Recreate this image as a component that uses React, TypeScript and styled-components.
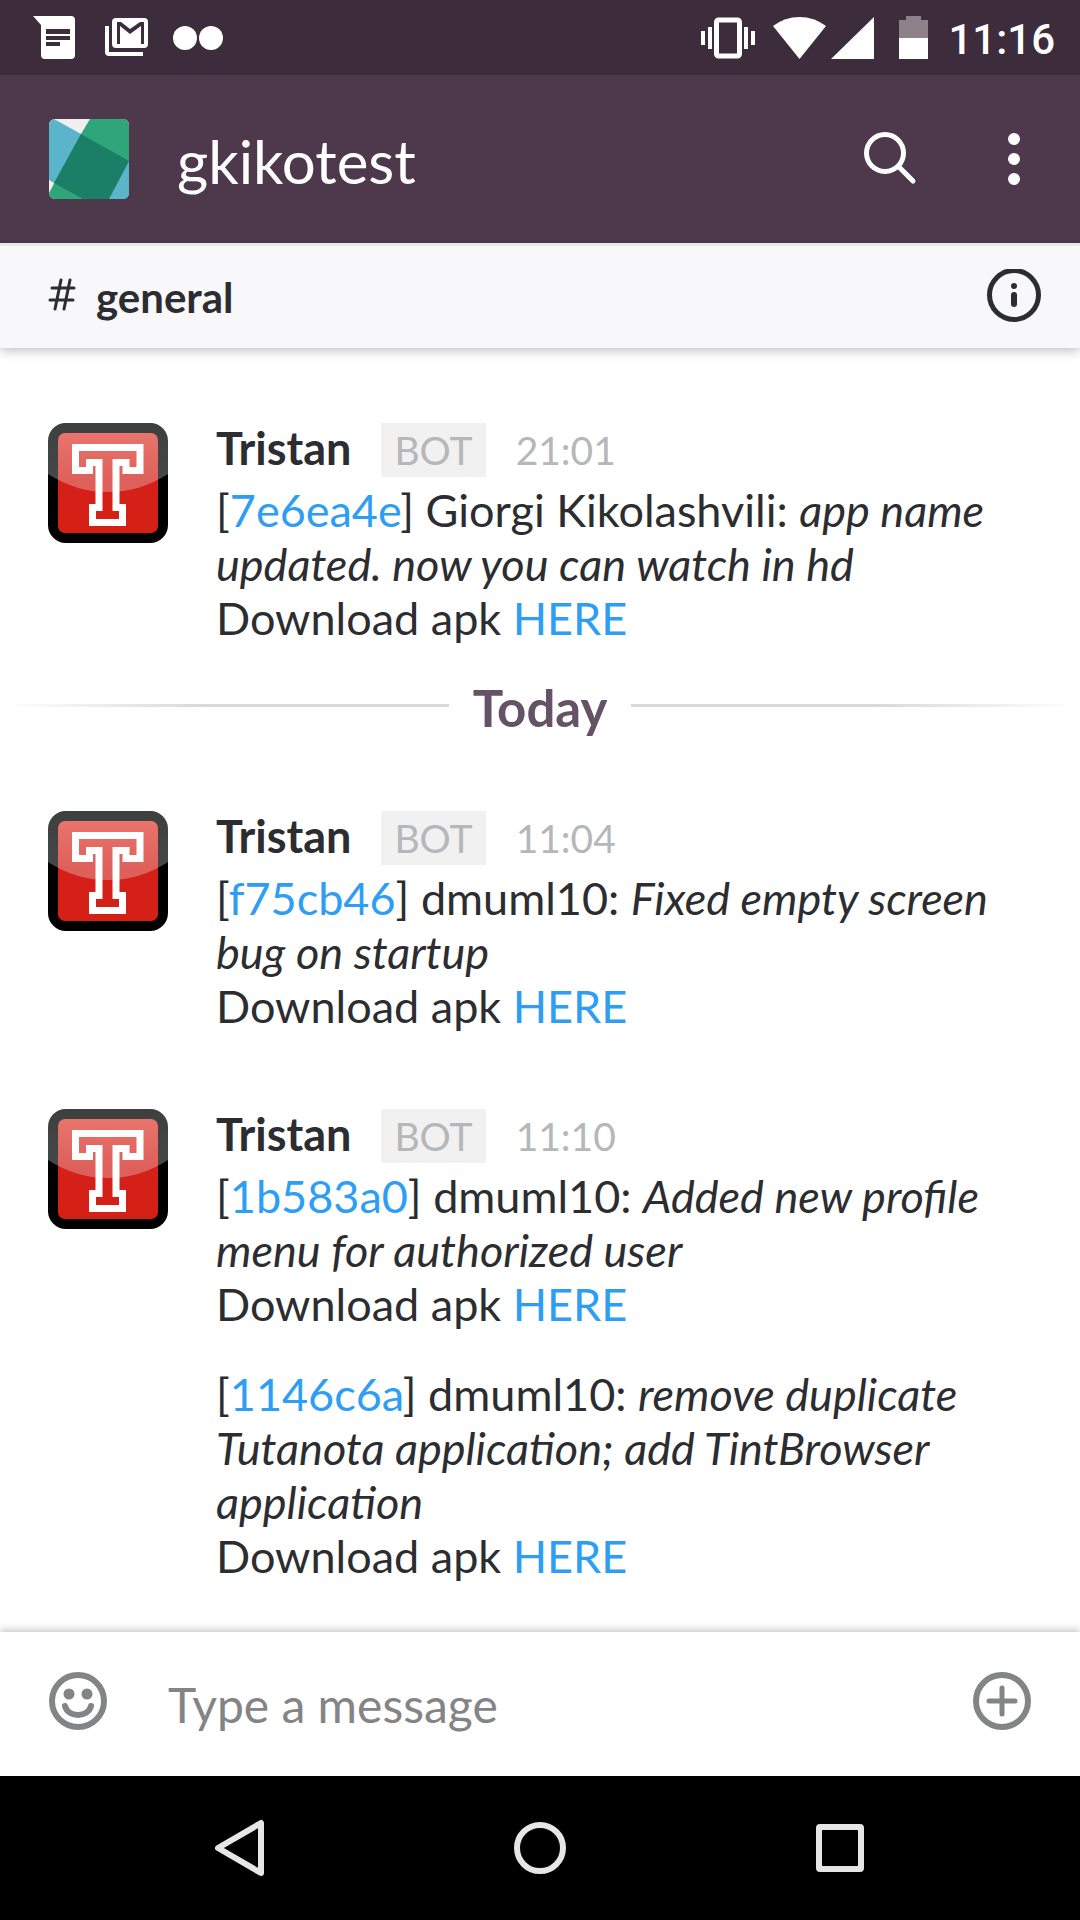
import React, { useId } from "react";
import styled, { createGlobalStyle } from "styled-components";

const GlobalStyle = createGlobalStyle`
  *, *::before, *::after { box-sizing: border-box; }
  html, body, #root { height: 100%; }
  body {
    margin: 0;
    background: #fff;
    color: #2c2d30;
    font-family: Lato, "Noto Sans", sans-serif;
  }
`;

const Screen = styled.div`
  display: flex;
  flex-direction: column;
  min-height: 100%;
`;

const StatusBar = styled.div`
  display: flex;
  align-items: center;
  justify-content: space-between;
  height: 75px;
  padding: 0 25px 0 33px;
  background: #3d2c3b;
  color: #fff;
`;

const StatusGroup = styled.div<{ $gap: number }>`
  display: flex;
  align-items: center;
  gap: ${(p) => p.$gap}px;
`;

const StatusIcons = styled.svg`
  display: block;
`;

const Clock = styled.time`
  font-family: Roboto, sans-serif;
  font-weight: 500;
  font-size: 42px;
  line-height: 48px;
  padding-top: 4px;
`;

const Header = styled.header`
  display: flex;
  align-items: center;
  height: 168px;
  padding: 0 48px 0 49px;
  background: #4e384b;
  color: #fff;
`;

const TeamName = styled.h1`
  flex: 1;
  margin: 0;
  padding: 4px 0 0 48px;
  font-size: 60px;
  font-weight: 400;
  line-height: 72px;
`;

const IconButton = styled.button`
  display: block;
  flex: none;
  padding: 0;
  border: 0;
  background: none;
  color: inherit;
  cursor: pointer;

  svg { display: block; }
`;

const HeaderActions = styled.div`
  display: flex;
  align-items: center;
  gap: 68px;
`;

const ChannelBar = styled.div`
  position: relative;
  z-index: 1;
  display: flex;
  align-items: center;
  gap: 20px;
  height: 105px;
  padding: 0 38px 0 48px;
  border-top: 3px solid #e8e8ea;
  background: #f8f8fa;
  box-shadow: 0 3px 10px rgba(0, 0, 0, 0.24);
`;

const ChannelName = styled.h2`
  flex: 1;
  margin: 0;
  font-size: 42px;
  font-weight: 700;
  line-height: 50px;
`;

const Feed = styled.main`
  flex: 1;
  padding: 73px 0 48px;
`;

const Message = styled.article`
  display: flex;
  gap: 48px;
  padding: 0 48px;

  & + & { margin-top: 74px; }
`;

const AvatarSvg = styled.svg`
  display: block;
  flex: none;
  margin-top: 2px;
`;

const MessageBody = styled.div`
  flex: 1;
  min-width: 0;
  font-size: 45px;
  line-height: 54px;
`;

const MessageHead = styled.div`
  display: flex;
  align-items: baseline;
  height: 54px;
  margin-bottom: 8px;
`;

const Author = styled.strong`
  font-weight: 700;
`;

const BotTag = styled.span`
  margin: 0 30px;
  padding: 0 13px;
  background: #f1f1f1;
  color: #b6b7b9;
  font-size: 39px;
`;

const Stamp = styled.time`
  color: #b6b7b9;
  font-size: 39px;
`;

const Commit = styled.p`
  margin: 0;

  & + & { margin-top: 36px; }
`;

const Link = styled.a`
  color: #2d9ef4;
  text-decoration: none;
`;

const DayDivider = styled.div`
  display: flex;
  align-items: center;
  gap: 24px;
  margin: 32px 0 71px;
`;

const Rule = styled.span<{ $to: "left" | "right" }>`
  flex: 1;
  height: 3px;
  margin-bottom: 4px;
  background: linear-gradient(to ${(p) => p.$to}, #d8d8d8 54%, transparent 99%);
`;

const DayLabel = styled.span`
  color: #655267;
  font-size: 51px;
  font-weight: 700;
  line-height: 61px;
`;

const Composer = styled.form`
  position: relative;
  display: flex;
  align-items: center;
  gap: 60px;
  height: 144px;
  padding: 0 48px;
  background: #fff;
  color: #838486;
  box-shadow: 0 -2px 8px rgba(0, 0, 0, 0.24);
`;

const MessageInput = styled.input`
  flex: 1;
  min-width: 0;
  height: 72px;
  padding: 0;
  border: 0;
  outline: 0;
  background: none;
  color: #2c2d30;
  font: 400 48px/64px Lato, "Noto Sans", sans-serif;

  &::placeholder { color: #838486; opacity: 1; }
`;

const NavBar = styled.nav`
  display: flex;
  align-items: center;
  justify-content: center;
  gap: 240px;
  height: 144px;
  background: #000;
  color: #e6e6e6;
`;

function TeamLogo() {
  const clip = useId();
  return (
    <svg width="80" height="80" viewBox="0 0 80 80" role="img" aria-label="Team logo">
      <clipPath id={clip}>
        <rect width="80" height="80" rx="6" />
      </clipPath>
      <g clipPath={`url(#${clip})`}>
        <rect width="80" height="80" fill="#f0f0f0" />
        <path d="M0-2L5 0 32 15 80 42V80H60L5 64 0 61z" fill="#5ab5cb" />
        <path d="M41 0H80V42L60 80H0V74L32 15z" fill="#2ea679" />
        <path d="M80 42V80H60z" fill="#5ab5cb" />
        <path d="M32 15L80 42 60 80H34L5 64z" fill="#1b7f67" />
      </g>
    </svg>
  );
}

function BotAvatar() {
  const id = useId();
  return (
    <AvatarSvg width="120" height="120" viewBox="0 0 120 120" role="img" aria-label="Tristan">
      <defs>
        <clipPath id={`${id}c`}>
          <rect width="120" height="120" rx="18" />
        </clipPath>
        <linearGradient id={`${id}r`} x1="0" y1="0" x2="0" y2="1">
          <stop offset="0" stopColor="#e5453a" />
          <stop offset="0.5" stopColor="#d5201a" />
          <stop offset="1" stopColor="#d52015" />
        </linearGradient>
        <linearGradient id={`${id}g`} x1="0" y1="0" x2="0" y2="1">
          <stop offset="0" stopColor="#f4fffd" stopOpacity="0.25" />
          <stop offset="1" stopColor="#f4fffd" stopOpacity="0.29" />
        </linearGradient>
      </defs>
      <g clipPath={`url(#${id}c)`}>
        <rect width="120" height="120" fill="#000" />
        <rect x="10" y="10" width="100" height="100" rx="7" fill={`url(#${id}r)`} />
        <path d="M0 0H120V51Q92 69 60 69T0 51z" fill={`url(#${id}g)`} />
        <path
          d="M27.500 24.500H92V47.500H78V39.500H68V84.500H74.500V99.500H44.500V84.500H51V39.500H41.500V47.500H27.500z"
          fill="none"
          stroke="#fff"
          strokeWidth="7"
        />
      </g>
    </AvatarSvg>
  );
}

type CommitInfo = { hash: string; user: string; text: string };
type MessageInfo = { time: string; commits: CommitInfo[] };

const yesterday: MessageInfo[] = [
  {
    time: "21:01",
    commits: [
      { hash: "7e6ea4e", user: "Giorgi Kikolashvili", text: "app name updated. now you can watch in hd" },
    ],
  },
];

const today: MessageInfo[] = [
  {
    time: "11:04",
    commits: [{ hash: "f75cb46", user: "dmuml10", text: "Fixed empty screen bug on startup" }],
  },
  {
    time: "11:10",
    commits: [
      { hash: "1b583a0", user: "dmuml10", text: "Added new profile menu for authorized user" },
      {
        hash: "1146c6a",
        user: "dmuml10",
        text: "remove duplicate Tutanota application; add TintBrowser application",
      },
    ],
  },
];

function BotMessage({ time, commits }: MessageInfo) {
  return (
    <Message>
      <BotAvatar />
      <MessageBody>
        <MessageHead>
          <Author>Tristan</Author>
          <BotTag>BOT</BotTag>
          <Stamp>{time}</Stamp>
        </MessageHead>
        {commits.map((c) => (
          <Commit key={c.hash}>
            [<Link href={`#${c.hash}`}>{c.hash}</Link>] {c.user}: <em>{c.text}</em>
            <br />
            Download apk <Link href={`#apk-${c.hash}`}>HERE</Link>
          </Commit>
        ))}
      </MessageBody>
    </Message>
  );
}

export default function App() {
  return (
    <>
      <GlobalStyle />
      <Screen>
        <StatusBar>
          <StatusGroup $gap={25}>
            <StatusIcons width="47" height="44" viewBox="0 0 47 44" aria-hidden="true">
              <path
                fillRule="evenodd"
                fill="#fff"
                d="M0 0H38a4 4 0 0 1 4 4V39a4 4 0 0 1-4 4H12a4 4 0 0 1-4-4V9zM13 13V18H37V13zM13 20V24H37V20zM13 26V30H27V26z"
              />
            </StatusIcons>
            <StatusIcons width="43" height="39" viewBox="0 0 43 39" aria-hidden="true">
              <path fill="#fff" d="M0 8H4V34H38V38H4a4 4 0 0 1-4-4z" />
              <rect x="7" width="36" height="30" rx="4" fill="#fff" />
              <path
                d="M12 4H16L25 11 35 4H39V26H36V8L25 16 15 8V26H12z"
                fill="#3d2c3b"
              />
            </StatusIcons>
            <StatusIcons width="50" height="24" viewBox="0 0 50 24" aria-hidden="true">
              <circle cx="12" cy="12" r="12" fill="#fff" />
              <circle cx="38" cy="12" r="12" fill="#fff" />
            </StatusIcons>
          </StatusGroup>
          <StatusGroup $gap={20}>
            <StatusIcons width="227" height="44" viewBox="0 0 227 44" aria-hidden="true">
              <g fill="#fff">
                <path d="M0 15H4V29H0zM7 11H11V33H7zM43 11H47V33H43zM50 15H54V29H50z" />
                <path d="M72 10Q84 1 98.500 1T125 10L98.500 43z" />
                <path d="M173 1V43H130z" />
                <path d="M198 22H227V43H198z" />
              </g>
              <rect x="15.500" y="4" width="23" height="36" rx="2" fill="none" stroke="#fff" strokeWidth="5" />
              <path d="M205 0H220V4H227V22H198V4H205z" fill="#8e8089" />
            </StatusIcons>
            <Clock>11:16</Clock>
          </StatusGroup>
        </StatusBar>

        <Header>
          <TeamLogo />
          <TeamName>gkikotest</TeamName>
          <HeaderActions>
            <IconButton type="button" aria-label="Search">
              <svg width="72" height="72" viewBox="0 0 72 72" fill="none" stroke="#fff" strokeWidth="5">
                <circle cx="29" cy="30" r="18.500" />
                <path d="M43 44L57 58" strokeLinecap="round" />
              </svg>
            </IconButton>
            <IconButton type="button" aria-label="More options">
              <svg width="36" height="60" viewBox="0 0 36 60" fill="#fff">
                <circle cx="18" cy="10" r="6" />
                <circle cx="18" cy="30" r="6" />
                <circle cx="18" cy="50" r="6" />
              </svg>
            </IconButton>
          </HeaderActions>
        </Header>

        <ChannelBar>
          <svg
            width="28"
            height="44"
            viewBox="0 0 28 44"
            fill="none"
            stroke="#2c2d30"
            strokeWidth="3"
            strokeLinecap="round"
            aria-hidden="true"
          >
            <path d="M13 5L7 34M22 5L16 34M4 13H26M2 25H25" />
          </svg>
          <ChannelName>general</ChannelName>
          <IconButton type="button" aria-label="Channel info">
            <svg width="56" height="56" viewBox="0 0 56 56" fill="none" stroke="#2c2d30">
              <circle cx="28" cy="26" r="24.500" strokeWidth="5" />
              <path d="M28 26V35" strokeWidth="6" strokeLinecap="round" />
              <circle cx="28" cy="17" r="3" fill="#2c2d30" stroke="none" />
            </svg>
          </IconButton>
        </ChannelBar>

        <Feed>
          {yesterday.map((m) => (
            <BotMessage key={m.time} {...m} />
          ))}
          <DayDivider>
            <Rule $to="left" />
            <DayLabel>Today</DayLabel>
            <Rule $to="right" />
          </DayDivider>
          {today.map((m) => (
            <BotMessage key={m.time} {...m} />
          ))}
        </Feed>

        <Composer>
          <IconButton type="button" aria-label="Insert emoji">
            <svg width="60" height="66" viewBox="0 0 60 66" fill="none" stroke="currentColor">
              <circle cx="30" cy="30" r="26" strokeWidth="6" />
              <path d="M17 35C20 47 40 47 43 35" strokeWidth="6" strokeLinecap="round" />
              <circle cx="21" cy="23" r="5.500" fill="currentColor" stroke="none" />
              <circle cx="39" cy="23" r="5.500" fill="currentColor" stroke="none" />
            </svg>
          </IconButton>
          <MessageInput aria-label="Message" placeholder="Type a message" />
          <IconButton type="button" aria-label="Add attachment">
            <svg width="60" height="66" viewBox="0 0 60 66" fill="none" stroke="currentColor">
              <circle cx="30" cy="30" r="26" strokeWidth="6" />
              <path d="M30 17V43M17 30H43" strokeWidth="5" strokeLinecap="round" />
            </svg>
          </IconButton>
        </Composer>

        <NavBar aria-label="System navigation">
          <IconButton type="button" aria-label="Back">
            <svg width="60" height="60" viewBox="0 0 60 60" fill="none" stroke="currentColor">
              <path d="M51 5V55L8 30z" strokeWidth="6" strokeLinejoin="round" />
            </svg>
          </IconButton>
          <IconButton type="button" aria-label="Home">
            <svg width="60" height="60" viewBox="0 0 60 60" fill="none" stroke="currentColor">
              <circle cx="30" cy="30" r="23" strokeWidth="6" />
            </svg>
          </IconButton>
          <IconButton type="button" aria-label="Recent apps">
            <svg width="60" height="60" viewBox="0 0 60 60" fill="none" stroke="currentColor">
              <rect x="9" y="9" width="42" height="42" rx="1" strokeWidth="6" strokeLinejoin="round" />
            </svg>
          </IconButton>
        </NavBar>
      </Screen>
    </>
  );
}
